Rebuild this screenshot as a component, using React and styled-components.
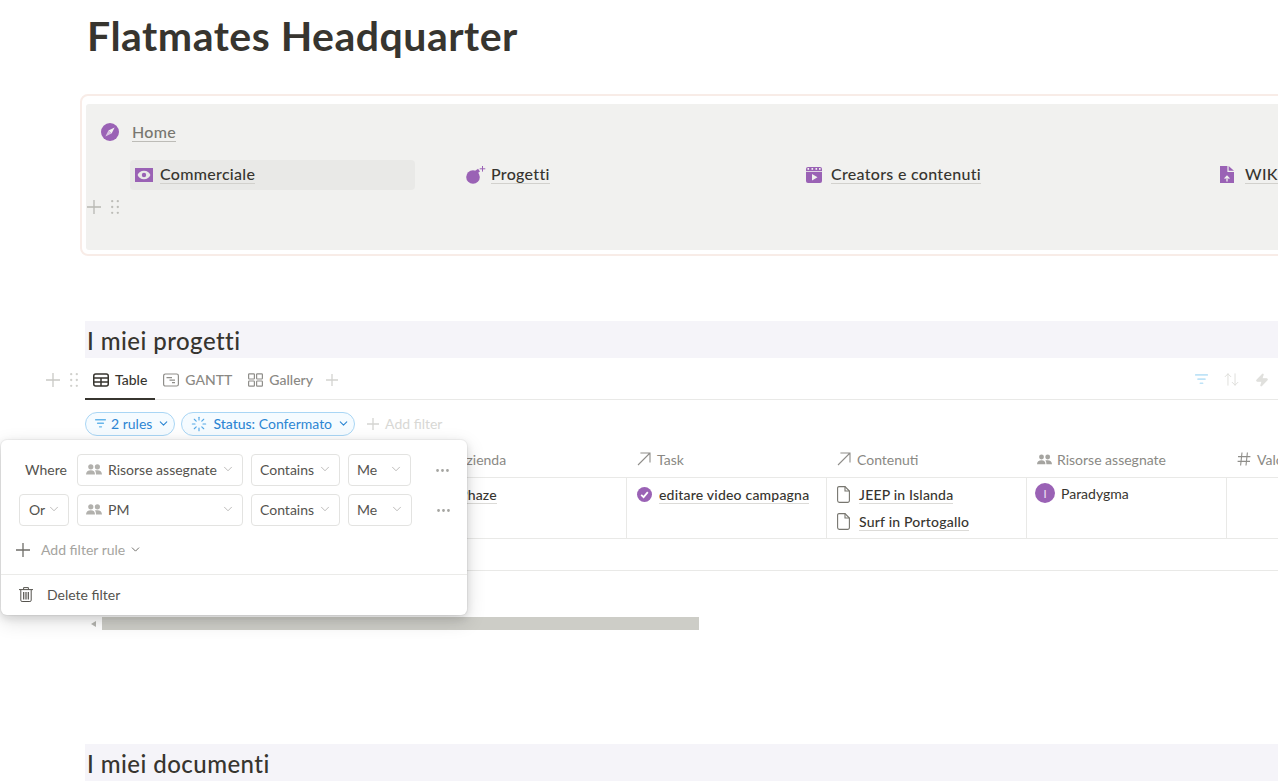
import React from 'react'
import styled, { createGlobalStyle } from 'styled-components'
import { ChevronDown, ArrowUpDown, Zap, Loader, MoreHorizontal } from 'lucide-react'

const purple = '#9a62b5'

const GlobalStyle = createGlobalStyle`
    html, body { margin: 0; padding: 0; background: #fff; }
    body { font-family: Lato, "Noto Sans", sans-serif; color: #37352f; }
`

const DotsIcon = ({ color = '#c4c4c0' }) => (
    <svg width="8" height="14" viewBox="0 0 8 14" fill={color}>
        {[1.2, 7, 12.8].map(y => [1.2, 6.8].map(x => <circle key={`${x}-${y}`} cx={x} cy={y} r="1.15" />))}
    </svg>
)

const PlusIcon = ({ size = 14, color = '#b8b8b3', weight = 1.3 }) => (
    <svg width={size} height={size} viewBox={`0 0 ${size} ${size}`} stroke={color} strokeWidth={weight} fill="none">
        <path d={`M${size / 2} 0V${size}M0 ${size / 2}H${size}`} />
    </svg>
)

const ArrowIcon = () => (
    <svg width="14" height="14" viewBox="0 0 14 14" fill="none" stroke="#8f8e8a" strokeWidth="1.1">
        <path d="M1 13 13 1M3.4 1H13V10.6" />
    </svg>
)

const PageIcon = () => (
    <svg width="13" height="17" viewBox="0 0 13 17" fill="none" stroke="#77766f" strokeWidth="1.1">
        <path d="M2 .6H8L12.4 5V14.6A1.8 1.8 0 0 1 10.6 16.4H2.4A1.8 1.8 0 0 1 .6 14.6V2A1.4 1.4 0 0 1 2 .6Z" />
        <path d="M8 .6V5H12.4" />
    </svg>
)

const TrashIcon = () => (
    <svg width="14" height="15" viewBox="0 0 14 15" fill="none" stroke="#55534e" strokeWidth="1">
        <path d="M0 2.6H14M4.6 2.4V.6H9.4V2.4" />
        <path d="M1.8 2.8V13.2A1.3 1.3 0 0 0 3.1 14.5H10.9A1.3 1.3 0 0 0 12.2 13.2V2.8" />
        <path d="M4.7 5V12.4M7 5V12.4M9.3 5V12.4" strokeWidth="1.2" />
    </svg>
)

const CompassIcon = () => (
    <svg width="18" height="18" viewBox="0 0 18 18">
        <circle cx="9" cy="9" r="9" fill={purple} />
        <path d="M13.6 4.4 10.6 10.6 7.4 7.4Z" fill="#f1f1ef" />
        <path d="M4.4 13.6 7.4 7.4 10.6 10.6Z" fill="#d9c4e3" />
    </svg>
)

const BillIcon = () => (
    <svg width="18" height="14" viewBox="0 0 18 14">
        <path fillRule="evenodd" fill={purple} d="M0 0H18V14H0ZM9 2.8C5.8 2.8 3.6 4.6 2.6 7 3.6 9.4 5.8 11.2 9 11.2S14.4 9.4 15.4 7C14.4 4.6 12.2 2.8 9 2.8Z" />
        <circle cx="9" cy="7" r="2.2" fill={purple} />
    </svg>
)

const BombIcon = () => (
    <svg width="20" height="18" viewBox="0 0 20 18">
        <circle cx="7" cy="11" r="6.8" fill={purple} />
        <path d="M9 5 L12 2.8 L14 5.4 L11 7.5Z" fill={purple} />
        <path d="M16.5 0V5.6M13.7 2.8H19.3" stroke={purple} strokeWidth="1" />
    </svg>
)

const ClapIcon = () => (
    <svg width="16" height="16" viewBox="0 0 16 16">
        <rect width="16" height="16" rx="2" fill={purple} />
        <path d="M6 7 11.5 10.2 6 13.4Z" fill="#f1f1ef" />
        {[2.5, 6.5, 10.5, 14].map(x => <rect key={x} x={x - 1} y="1" width="1.6" height="1.8" fill="#f1f1ef" />)}
        <rect y="4.2" width="16" height="0.8" fill="#f1f1ef" />
    </svg>
)

const UploadFileIcon = () => (
    <svg width="17" height="17" viewBox="-2 0 17 17" style={{ marginLeft: -2 }}>
        <path d="M0 0H7.4V6H14V17H0Z" fill={purple} />
        <path d="M8.6 0 14 4.8H8.6Z" fill={purple} />
        <path d="M7 15.5V10.5M4.6 12.6 7 10.2 9.4 12.6" stroke="#f1f1ef" strokeWidth="1.3" fill="none" />
    </svg>
)

const TableIcon = () => (
    <svg width="16" height="14" viewBox="0 0 16 14" fill="none" stroke="#37352f" strokeWidth="1.5">
        <rect x=".75" y="1" width="14.5" height="12" rx="2" />
        <path d="M.75 5H15.25M.75 9H15.25M8 5V13" />
    </svg>
)

const GanttIcon = () => (
    <svg width="16" height="14" viewBox="0 0 16 14" fill="none" stroke="#8f8e8a" strokeWidth="1.2">
        <rect x=".6" y="1" width="14.8" height="12" rx="1.8" />
        <path d="M3.5 4.6H9M6.5 7.2H12M9 9.6H12" />
    </svg>
)

const GalleryIcon = () => (
    <svg width="15" height="14" viewBox="0 0 15 14" fill="none" stroke="#8f8e8a" strokeWidth="1.2">
        <rect x=".6" y=".8" width="5.8" height="5.2" rx=".8" />
        <rect x="8.6" y=".8" width="5.8" height="5.2" rx=".8" />
        <rect x=".6" y="8" width="5.8" height="5.2" rx=".8" />
        <rect x="8.6" y="8" width="5.8" height="5.2" rx=".8" />
    </svg>
)

const FilterLinesIcon = ({ size = 14, color = '#66b5ea' }) => (
    <svg width={size} height={size * 0.8} viewBox="0 0 14 11" fill={color}>
        <rect width="14" height="1.8" rx=".6" />
        <rect x="2.5" y="4.5" width="9" height="1.8" rx=".6" />
        <rect x="5" y="9" width="4" height="1.8" rx=".6" />
    </svg>
)

const PeopleIcon = ({ color = '#b2b1ad' }) => (
    <svg width="16" height="11" viewBox="0 0 16 11" fill={color}>
        <circle cx="4.8" cy="2.8" r="2.6" />
        <circle cx="11.4" cy="2.8" r="2.6" />
        <path d="M0 10.6C0 7.6 2 6.2 4.8 6.2S9 7.6 9 10.6ZM10 10.6C10 8.4 9.6 7.2 8.8 6.6 9.5 6.3 10.4 6.2 11.4 6.2 14 6.2 16 7.6 16 10.6Z" />
    </svg>
)

const HashIcon = () => (
    <svg width="14" height="14" viewBox="0 0 14 14" fill="none" stroke="#8f8e8a" strokeWidth="1.1">
        <path d="M5 .5 3.6 13.5M10.4 .5 9 13.5M1 4.6H13.4M.6 9.4H13" />
    </svg>
)

const CheckBadge = () => (
    <svg width="15" height="15" viewBox="0 0 15 15">
        <circle cx="7.5" cy="7.5" r="7.5" fill={purple} />
        <path d="M4.2 7.8 6.6 10.1 10.8 5.2" stroke="#fff" strokeWidth="1.8" fill="none" />
    </svg>
)

const links = [
    { label: 'Commerciale', icon: <BillIcon />, active: true },
    { label: 'Progetti', icon: <BombIcon /> },
    { label: 'Creators e contenuti', icon: <ClapIcon /> },
    { label: 'WIKI', icon: <UploadFileIcon /> },
]

const cells = [
    { head: 'Azienda', headIcon: <ArrowIcon />, rows: [{ text: 'Phaze', icon: <PageIcon /> }] },
    { head: 'Task', headIcon: <ArrowIcon />, rows: [{ text: 'editare video campagna', icon: <CheckBadge /> }] },
    {
        head: 'Contenuti',
        headIcon: <ArrowIcon />,
        rows: [
            { text: 'JEEP in Islanda', icon: <PageIcon /> },
            { text: 'Surf in Portogallo', icon: <PageIcon /> },
        ],
    },
    { head: 'Risorse assegnate', headIcon: <PeopleIcon color="#a5a4a0" />, person: 'Paradygma' },
    { head: 'Valore', headIcon: <HashIcon /> },
]

const filterRows = [
    { lead: 'Where', field: 'Risorse assegnate', valueWidth: 63 },
    { lead: 'Or', field: 'PM', valueWidth: 64 },
]

const App = () => (
    <Page>
        <GlobalStyle />
        <Content>
            <Title>Flatmates Headquarter</Title>

            <CalloutFrame>
                <Callout>
                    <HomeRow>
                        <CompassIcon />
                        <HomeLink>Home</HomeLink>
                    </HomeRow>
                    <LinkGrid>
                        {links.map(link => (
                            <LinkCell key={link.label} active={link.active}>
                                <LinkIcon>{link.icon}</LinkIcon>
                                <LinkText>{link.label}</LinkText>
                            </LinkCell>
                        ))}
                    </LinkGrid>
                    <BlockHandle>
                        <PlusIcon />
                        <DotsIcon color="#bcbcb7" />
                    </BlockHandle>
                </Callout>
            </CalloutFrame>

            <SectionHeading first>I miei progetti</SectionHeading>

            <TabBar>
                <RowHandle>
                    <PlusIcon color="#c9c9c5" />
                    <DotsIcon color="#d0d0cc" />
                </RowHandle>
                <Tab active><TableIcon />Table</Tab>
                <Tab><GanttIcon />GANTT</Tab>
                <Tab><GalleryIcon />Gallery</Tab>
                <AddView><PlusIcon size={12} color="#d3d3d0" /></AddView>
                <TabTools>
                    <FilterLinesIcon size={13} color="#bfe3f7" />
                    <ArrowUpDown size={17} strokeWidth={1.3} color="#dcdcd9" />
                    <Zap size={14} color="#e0e0dd" fill="#e0e0dd" />
                </TabTools>
            </TabBar>

            <FilterBar>
                <Pill>
                    <FilterLinesIcon size={11} />
                    <span>2 rules</span>
                    <ChevronDown size={13} strokeWidth={2} />
                </Pill>
                <Pill>
                    <Loader size={16} strokeWidth={1.7} color="#55a8e6" />
                    <PillText><b>Status:</b> Confermato</PillText>
                    <ChevronDown size={13} strokeWidth={2} />
                </Pill>
                <AddFilter><PlusIcon size={12} color="#d5d5d2" />Add filter</AddFilter>
            </FilterBar>

            <TableWrap>
                <HeadRow>
                    {cells.map(cell => (
                        <HeadCell key={cell.head}>
                            <HeadIcon>{cell.headIcon}</HeadIcon>
                            {cell.head}
                        </HeadCell>
                    ))}
                </HeadRow>
                <BodyRow>
                    {cells.map(cell => (
                        <BodyCell key={cell.head}>
                            {cell.rows && cell.rows.map(row => (
                                <RelationRow key={row.text}>
                                    <RelationIcon>{row.icon}</RelationIcon>
                                    <RelationText>{row.text}</RelationText>
                                </RelationRow>
                            ))}
                            {cell.person && (
                                <Person>
                                    <Avatar>I</Avatar>
                                    {cell.person}
                                </Person>
                            )}
                        </BodyCell>
                    ))}
                </BodyRow>
                <EmptyRow />
            </TableWrap>

            <ScrollArea>
                <ScrollArrow />
                <ScrollThumb />
            </ScrollArea>

            <SectionHeading>I miei documenti</SectionHeading>
        </Content>

        <Popover>
            <Rules>
                {filterRows.map(row => (
                    <RuleRow key={row.lead}>
                        {row.lead === 'Where'
                            ? <WhereLabel>Where</WhereLabel>
                            : <SelectBox width={50} inset={9}>Or<ChevronDown size={14} strokeWidth={1} /></SelectBox>}
                        <SelectBox width={166}>
                            <FieldName><PeopleIcon />{row.field}</FieldName>
                            <ChevronDown size={14} strokeWidth={1} />
                        </SelectBox>
                        <SelectBox width={89}>Contains<ChevronDown size={14} strokeWidth={1} /></SelectBox>
                        <SelectBox width={row.valueWidth}>Me<ChevronDown size={14} strokeWidth={1} /></SelectBox>
                        <MoreButton><MoreHorizontal size={17} strokeWidth={2} color="#a5a5a1" /></MoreButton>
                    </RuleRow>
                ))}
            </Rules>
            <AddRule>
                <PlusIcon color="#6f6e69" />
                <span>Add filter rule</span>
                <ChevronDown size={13} strokeWidth={1.8} color="#6f6e69" />
            </AddRule>
            <PopoverFoot>
                <TrashIcon />
                Delete filter
            </PopoverFoot>
        </Popover>
    </Page>
)

export default App

const Page = styled.div`
    position: relative;
    width: 1278px;
    height: 782px;
    overflow: hidden;
    background: #fff;
`
const Content = styled.div`
    width: 1420px;
    padding-left: 85px;
    box-sizing: content-box;
`
const Title = styled.h1`
    margin: 0;
    height: 94px;
    padding: 12px 0 0 2px;
    box-sizing: border-box;
    font-size: 41px;
    letter-spacing: 0.5px;
    line-height: 47px;
    font-weight: 700;
    color: #37352f;
`
const CalloutFrame = styled.div`
    margin-left: -5px;
    padding: 8px 0 4px 4px;
    height: 162px;
    box-sizing: border-box;
    border: 2px solid #f8ece7;
    border-radius: 8px;
`
const Callout = styled.div`
    position: relative;
    height: 146px;
    background: #f1f1ef;
    border-radius: 3px;
    padding: 18px 0 0 15px;
    box-sizing: border-box;
`
const HomeRow = styled.div`
    display: flex;
    align-items: center;
    gap: 13px;
    height: 20px;
`
const HomeLink = styled.span`
    font-size: 16px;
    letter-spacing: 0.3px;
    color: #78776f;
    font-weight: 500;
    border-bottom: 1px solid #bdbcb7;
    line-height: 18px;
`
const LinkGrid = styled.div`
    display: grid;
    grid-template-columns: 331px 340px 414px 200px;
    margin: 18px 0 0 29px;
`
const LinkCell = styled.div`
    display: flex;
    align-items: center;
    width: 285px;
    height: 30px;
    padding: 0 0 1px 5px;
    box-sizing: border-box;
    border-radius: 4px;
    background: ${props => props.active ? '#e9e9e7' : 'transparent'};
`
const LinkIcon = styled.span`
    display: flex;
    align-items: center;
    width: 25px;
`
const LinkText = styled.span`
    font-size: 16px;
    letter-spacing: 0.3px;
    font-weight: 500;
    line-height: 18px;
    border-bottom: 1px solid #d2d1cd;
    color: #37352f;
`
const BlockHandle = styled.div`
    position: absolute;
    left: 1px;
    top: 96px;
    display: flex;
    align-items: center;
    gap: 10px;
`
const SectionHeading = styled.h2`
    margin: ${props => props.first ? '65px 0 0' : '114px 0 0'};
    height: 37px;
    padding-left: 2px;
    background: #f5f4f9;
    font-size: 24px;
    letter-spacing: 0.45px;
    line-height: 40px;
    font-weight: 500;
    color: #37352f;
`
const TabBar = styled.div`
    position: relative;
    display: flex;
    align-items: center;
    height: 42px;
    padding-top: 3px;
    box-sizing: border-box;
    border-bottom: 1px solid #e9e9e7;
`
const RowHandle = styled.div`
    position: absolute;
    left: -39px;
    top: 15px;
    display: flex;
    align-items: center;
    gap: 10px;
`
const Tab = styled.div`
    display: flex;
    align-items: center;
    gap: 6px;
    height: 39px;
    margin-bottom: -1px;
    padding: 0 8px;
    box-sizing: border-box;
    font-size: 14px;
    color: ${props => props.active ? '#37352f' : '#8a8984'};
    font-weight: 500;
    border-bottom: 2px solid ${props => props.active ? '#37352f' : 'transparent'};
`
const AddView = styled.div`
    display: flex;
    align-items: center;
    margin-left: 5px;
`
const TabTools = styled.div`
    position: absolute;
    left: 1110px;
    top: 13px;
    display: flex;
    align-items: center;
    gap: 15px;
`
const FilterBar = styled.div`
    display: flex;
    align-items: center;
    gap: 6px;
    height: 24px;
    margin-top: 12px;
`
const Pill = styled.div`
    display: flex;
    align-items: center;
    gap: 5px;
    height: 24px;
    padding: 0 4px 1px 9px;
    box-sizing: border-box;
    border: 1px solid #a9d6f5;
    border-radius: 12px;
    background: #f5fbff;
    color: #2d86d3;
    font-size: 14px;
    b { font-weight: 500; }
`
const PillText = styled.span`
    margin-left: 1px;
`
const AddFilter = styled.div`
    display: flex;
    align-items: center;
    gap: 6px;
    margin-left: 6px;
    padding-bottom: 1px;
    font-size: 14px;
    color: #d8d8d5;
`
const TableWrap = styled.div`
    margin-top: 7px;
    padding-left: 342px;
`
const HeadRow = styled.div`
    display: flex;
    height: 34px;
    border-bottom: 1px solid #e9e9e7;
`
const HeadCell = styled.div`
    display: flex;
    align-items: center;
    width: 200px;
    padding: 0 0 2px 10px;
    box-sizing: border-box;
    font-size: 14px;
    color: #8a8984;
`
const HeadIcon = styled.span`
    display: flex;
    align-items: center;
    width: 15px;
    margin-right: 5px;
    color: #8f8e8a;
`
const BodyRow = styled.div`
    display: flex;
    height: 60px;
    border-bottom: 1px solid #e9e9e7;
`
const BodyCell = styled.div`
    width: 200px;
    padding: 3px 0 0 9px;
    box-sizing: border-box;
    border-right: 1px solid #e9e9e7;
    &:last-child { border-right: 0; }
`
const RelationRow = styled.div`
    display: flex;
    align-items: center;
    height: 27px;
    margin-left: 1px;
`
const RelationIcon = styled.span`
    display: flex;
    align-items: center;
    width: 22px;
`
const RelationText = styled.span`
    font-size: 14px;
    letter-spacing: 0.2px;
    font-weight: 500;
    line-height: 17px;
    color: #37352f;
    border-bottom: 1px solid #dcdbd8;
`
const Person = styled.div`
    display: flex;
    align-items: center;
    gap: 6px;
    height: 22px;
    margin: 1px 0 0 -1px;
    font-size: 14px;
    color: #37352f;
`
const Avatar = styled.span`
    display: flex;
    align-items: center;
    justify-content: center;
    width: 20px;
    height: 20px;
    border-radius: 50%;
    background: ${purple};
    color: #f1e7f5;
    font-size: 11px;
`
const EmptyRow = styled.div`
    height: 31px;
    margin-left: -342px;
    border-bottom: 1px solid #e9e9e7;
`
const ScrollArea = styled.div`
    display: flex;
    align-items: center;
    height: 13px;
    margin-top: 46px;
    padding-left: 6px;
`
const ScrollArrow = styled.span`
    width: 0;
    height: 0;
    margin-right: 6px;
    border-top: 3px solid transparent;
    border-bottom: 3px solid transparent;
    border-right: 5px solid #b5b5b0;
`
const ScrollThumb = styled.div`
    width: 597px;
    height: 13px;
    background: #cdcdc7;
`
const Popover = styled.div`
    position: absolute;
    left: 1px;
    top: 440px;
    width: 466px;
    height: 175px;
    box-sizing: border-box;
    background: #fff;
    border-radius: 6px;
    box-shadow: 0 0 0 1px rgba(15, 15, 15, 0.04), 0 3px 8px rgba(15, 15, 15, 0.12), 0 6px 20px rgba(15, 15, 15, 0.14);
    display: flex;
    flex-direction: column;
`
const Rules = styled.div`
    display: flex;
    flex-direction: column;
    gap: 8px;
    padding: 14px 0 0 18px;
`
const RuleRow = styled.div`
    display: flex;
    align-items: center;
    gap: 8px;
    height: 32px;
`
const WhereLabel = styled.span`
    width: 50px;
    padding: 0 0 2px 6px;
    box-sizing: border-box;
    font-size: 14px;
    color: #55534e;
`
const SelectBox = styled.div`
    display: flex;
    align-items: center;
    justify-content: space-between;
    width: ${props => props.width}px;
    height: 32px;
    padding: 0 7px 2px ${props => props.inset || 8}px;
    box-sizing: border-box;
    border: 1px solid #e3e3e1;
    border-radius: 4px;
    font-size: 14px;
    color: #55534e;
    svg:last-child { color: #8f8e8a; }
`
const FieldName = styled.span`
    display: flex;
    align-items: center;
    gap: 6px;
`
const MoreButton = styled.span`
    display: flex;
    margin-left: 15px;
`
const AddRule = styled.div`
    display: flex;
    align-items: center;
    height: 32px;
    margin-top: 8px;
    padding-left: 15px;
    font-size: 14px;
    color: #a5a4a0;
    span { margin: 0 4px 0 11px; }
`
const PopoverFoot = styled.div`
    display: flex;
    align-items: center;
    gap: 14px;
    margin-top: 8px;
    height: 41px;
    padding-left: 18px;
    border-top: 1px solid #ebebe9;
    font-size: 14px;
    color: #55534e;
`
